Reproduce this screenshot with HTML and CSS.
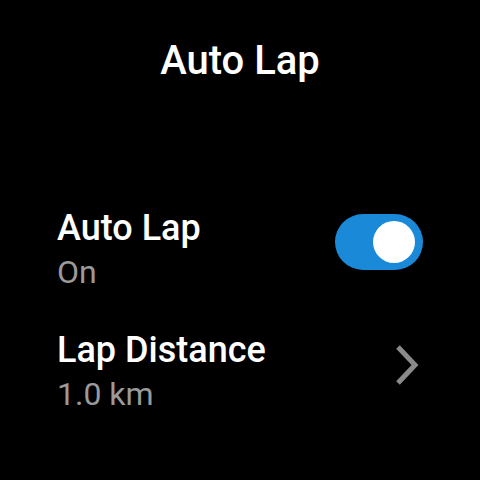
FILE: index.html
```html
<!DOCTYPE html>
<html lang="en">
<head>
    <meta charset="UTF-8">
    <title>Auto Lap</title>
    <link rel="stylesheet" href="styles.css">
</head>
<body>
    <div class="screen">
        <h1 class="title">Auto Lap</h1>
        <div class="list">
            <div class="row">
                <div class="text">
                    <div class="label">Auto Lap</div>
                    <div class="value">On</div>
                </div>
                <div class="toggle on"><div class="knob"></div></div>
            </div>
            <div class="row">
                <div class="text">
                    <div class="label">Lap Distance</div>
                    <div class="value">1.0 km</div>
                </div>
                <svg class="chevron" width="24" height="42" viewBox="0 0 24 42">
                    <path d="M3 3 L20 21 L3 39" fill="none" stroke="#8a8a8a" stroke-width="5"/>
                </svg>
            </div>
        </div>
    </div>
</body>
</html>
```
FILE: styles.css
```css
* {
    margin: 0;
    padding: 0;
    box-sizing: border-box;
}
body {
    background: #000;
    font-family: Roboto, "Noto Sans", sans-serif;
    color: #fff;
}
.screen {
    width: 480px;
    height: 480px;
    padding-top: 37px;
}
.title {
    text-align: center;
    font-size: 40px;
    font-weight: 500;
    line-height: 48px;
}
.list {
    margin-top: 123px;
    padding: 0 57px;
}
.row {
    display: flex;
    align-items: flex-start;
    justify-content: space-between;
}
.row + .row {
    margin-top: 40px;
}
.label {
    font-size: 36px;
    font-weight: 500;
    line-height: 40px;
}
.value {
    margin-top: 6px;
    font-size: 32px;
    color: #9a9a9a;
    line-height: 36px;
}
.toggle {
    margin-top: 6px;
    width: 88px;
    height: 56px;
    border-radius: 28px;
    background: #1a8ad8;
    display: flex;
    align-items: center;
    justify-content: flex-end;
    padding-right: 8px;
}
.knob {
    width: 42px;
    height: 42px;
    border-radius: 50%;
    background: #fff;
}
.chevron {
    margin-top: 14px;
    margin-right: 4px;
}
```
